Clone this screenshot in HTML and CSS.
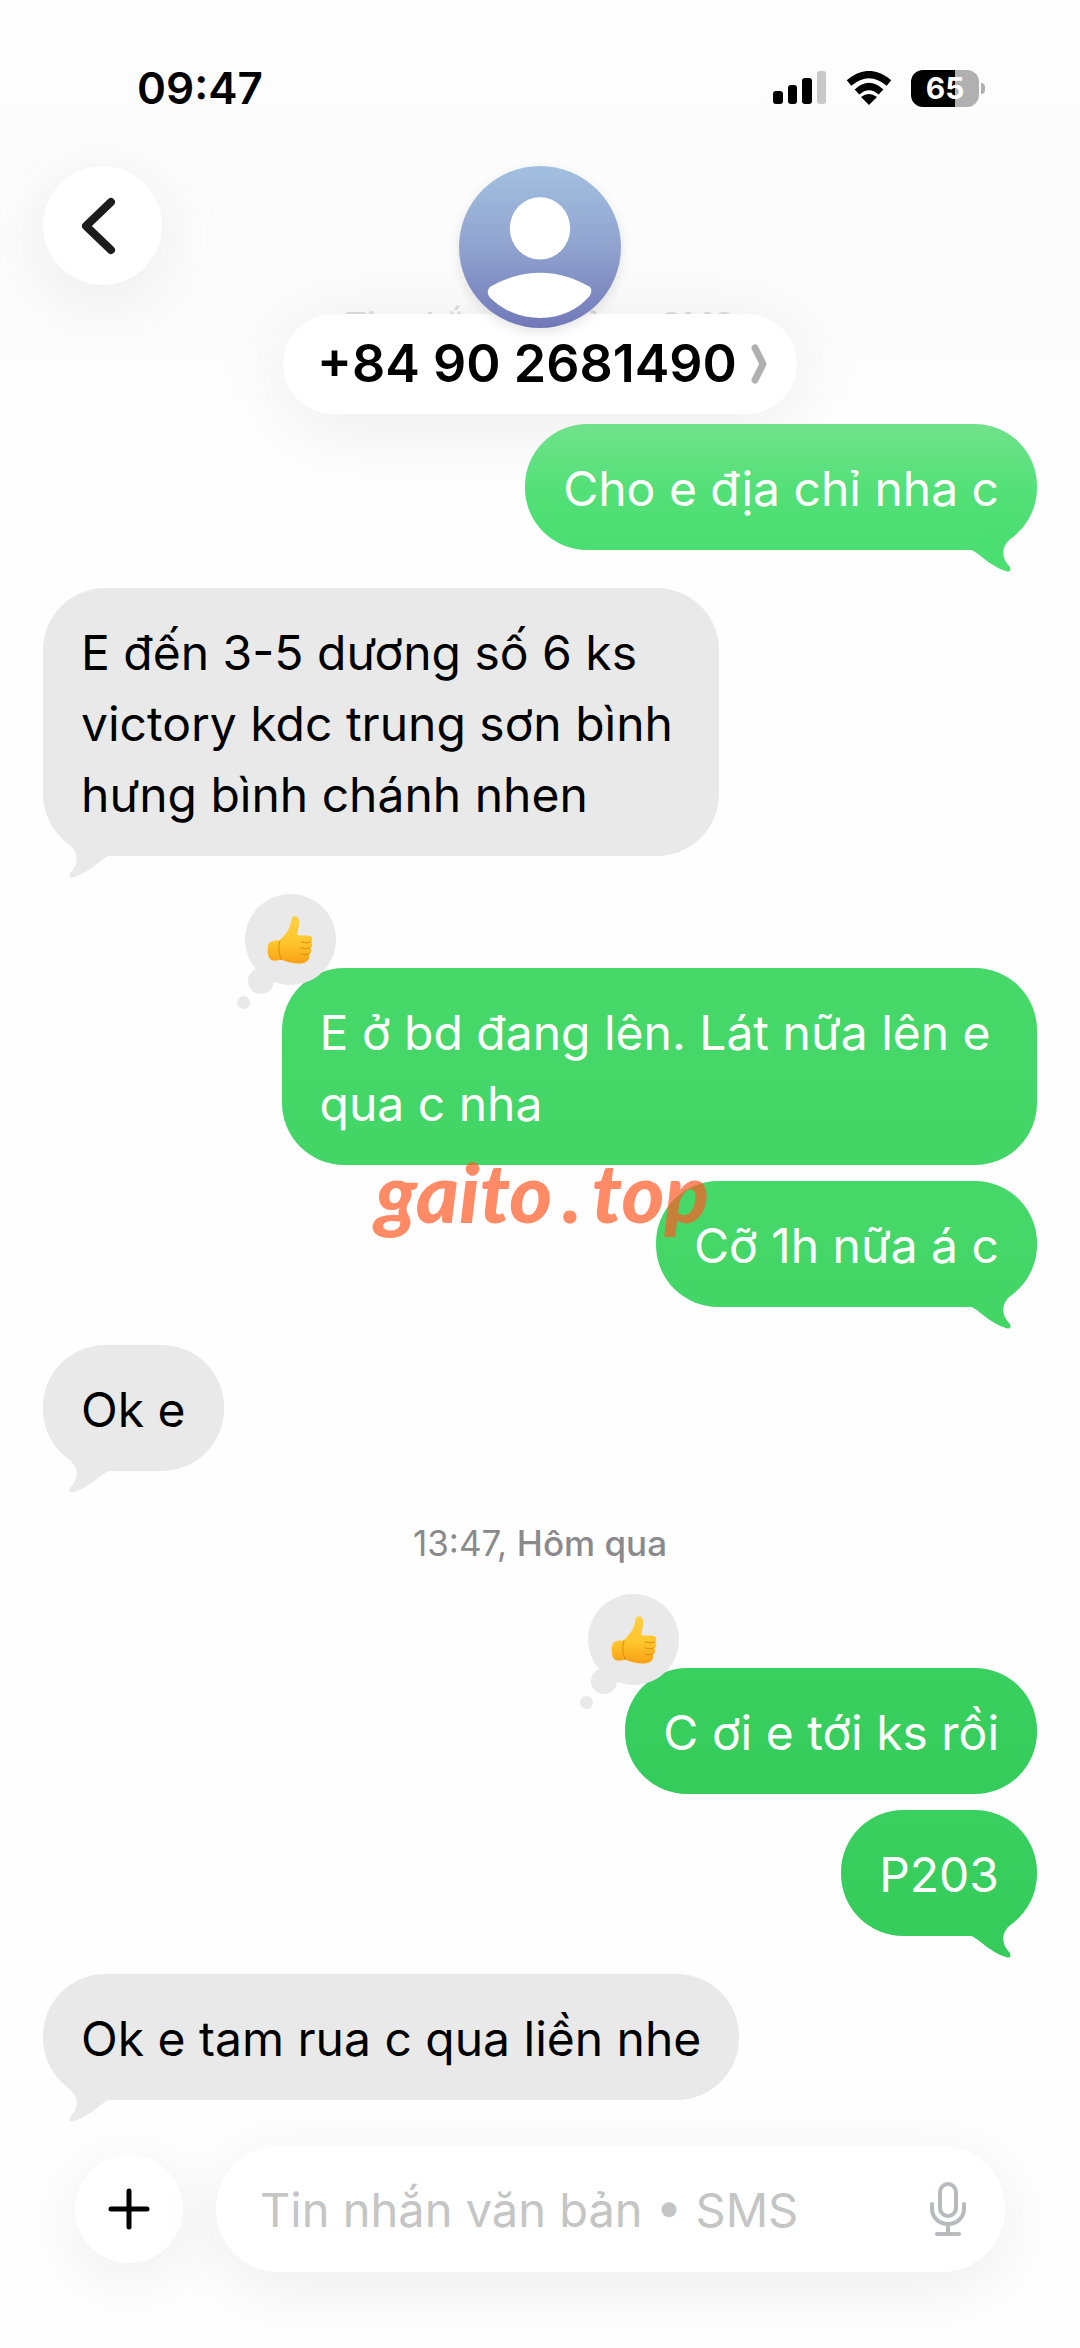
FILE: index.html
```html
<!DOCTYPE html>
<html lang="vi">
<head>
<meta charset="utf-8">
<meta name="viewport" content="width=device-width, initial-scale=1">
<title>+84 90 2681490</title>
<link rel="stylesheet" href="styles.css">
</head>
<body>
<svg class="defs" width="0" height="0" aria-hidden="true">
  <defs>
    <symbol id="tail" viewBox="0 0 66 50">
      <path d="M0 18V26C6 27 18 42 35 47Q41 49 39 43C33 37 31 30 33 24C35 18 41 13 46 8L20 5Z"/>
    </symbol>
    <linearGradient id="thumb-fill" x1="0" y1="0" x2="0" y2="1">
      <stop offset="0" stop-color="#ffcf45"/>
      <stop offset=".55" stop-color="#ffc62c"/>
      <stop offset="1" stop-color="#f7a014"/>
    </linearGradient>
    <symbol id="thumb" viewBox="0 0 46 50">
      <path fill="url(#thumb-fill)" d="M25 3C27 0 31 1 32 5C33 10 31 15 30 20C34 21 39 20 43 21C46 22 46 26 44 27C46 29 46 32 43 33C45 35 45 38 42 39C43 42 42 45 39 47C33 50 22 48 15 45C11 45 6 47 3 44C0 40 0 32 2 28C5 25 10 26 13 25C17 21 22 15 23 11C24 8 24 5 25 3Z"/>
      <path fill="none" stroke="#e08a12" stroke-width="1" stroke-linecap="round" d="M34 27Q39 29 44 27M34 33Q39 35 43 33M34 39Q38 41 42 39M13 26Q10 34 14 44"/>
    </symbol>
  </defs>
</svg>

<header class="header">
  <div class="status">
    <time class="clock">09:47</time>
    <div class="indicators">
      <svg width="54" height="34" viewBox="0 0 54 34" role="img" aria-label="Sóng">
        <rect x="0" y="20" width="10" height="13" rx="3"/>
        <rect x="15" y="14" width="9" height="19" rx="3"/>
        <rect x="29" y="7" width="10" height="26" rx="3"/>
        <rect x="44" y="0" width="9" height="33" rx="3" fill="#c8c8c8"/>
      </svg>
      <svg width="46" height="34" viewBox="0 0 46 34" role="img" aria-label="Wi-Fi">
        <g fill="none" stroke="#000" stroke-width="7">
          <path d="M3 12Q23 -5 43 12"/>
          <path d="M11 21Q23 10 35 21"/>
        </g>
        <path d="M23 34L15 26Q23 20 31 26Z"/>
      </svg>
      <div class="battery"><span class="battery-level">65</span></div>
    </div>
  </div>

  <nav class="nav">
    <button class="back" aria-label="Quay lại">
      <svg width="36" height="58" viewBox="0 0 36 58"><path d="M31 5L6 29L31 53" fill="none" stroke="#1c1c1c" stroke-width="8" stroke-linecap="round" stroke-linejoin="round"/></svg>
    </button>
    <div class="contact">
      <p class="service">Tin nhắn văn bản • SMS</p>
      <svg class="avatar" width="162" height="162" viewBox="0 0 161 161" aria-hidden="true">
        <defs>
          <linearGradient id="avatar-fill" x1="0" y1="0" x2="0" y2="1">
            <stop offset="0" stop-color="#a3c0e0"/>
            <stop offset=".5" stop-color="#90a3cf"/>
            <stop offset="1" stop-color="#7178b8"/>
          </linearGradient>
        </defs>
        <circle cx="80.5" cy="80.5" r="80.5" fill="url(#avatar-fill)"/>
        <ellipse cx="80.5" cy="62" rx="30" ry="31" fill="#fff"/>
        <path d="M31 120C45 112 62 106 81 106C99 106 116 112 130 120Q133 124 130 129C118 143 101 151 81 151C60 151 43 143 31 131Q26 125 31 120Z" fill="#fff"/>
      </svg>
      <button class="contact-name">+84 90 2681490
        <svg width="16" height="40" viewBox="0 0 16 40" aria-hidden="true"><path d="M4 4L12 20L4 36" fill="none" stroke="#b0b0b0" stroke-width="7" stroke-linecap="round" stroke-linejoin="round"/></svg>
      </button>
    </div>
  </nav>
</header>

<main class="thread">
  <section class="group sent">
    <p class="bubble faded">Cho e địa chỉ nha c<svg class="tail"><use href="#tail"/></svg></p>
  </section>
  <section class="group received">
    <p class="bubble long">E đến 3-5 dương số 6 ks victory kdc trung sơn bình hưng bình chánh nhen<svg class="tail"><use href="#tail"/></svg></p>
  </section>
  <section class="group sent reacted tone-mid">
    <div class="bubble long">E ở bd đang lên. Lát nữa lên e qua c nha
      <span class="reaction"><svg width="46" height="50" role="img" aria-label="Thích"><use href="#thumb"/></svg></span>
    </div>
    <p class="bubble">Cỡ 1h nữa á c<svg class="tail"><use href="#tail"/></svg><span class="watermark">gaito<span class="dot">.</span>top</span></p>
  </section>
  <section class="group received">
    <p class="bubble">Ok e<svg class="tail"><use href="#tail"/></svg></p>
  </section>
  <p class="stamp">13:47, <strong>Hôm qua</strong></p>
  <section class="group sent reacted tone-deep">
    <div class="bubble">C ơi e tới ks rồi
      <span class="reaction"><svg width="46" height="50" role="img" aria-label="Thích"><use href="#thumb"/></svg></span>
    </div>
    <p class="bubble">P203<svg class="tail"><use href="#tail"/></svg></p>
  </section>
  <section class="group received">
    <p class="bubble">Ok e tam rua c qua liền nhe<svg class="tail"><use href="#tail"/></svg></p>
  </section>
</main>

<form class="composer">
  <button class="add" type="button" aria-label="Thêm">
    <svg width="42" height="42" viewBox="0 0 42 42"><path d="M21 3V39M3 21H39" stroke="#000" stroke-width="5" stroke-linecap="round"/></svg>
  </button>
  <div class="field">
    <input class="field-input" type="text" aria-label="Tin nhắn" placeholder="Tin nhắn văn bản • SMS">
    <button class="mic" type="button" aria-label="Đọc chính tả">
      <svg width="36" height="54" viewBox="0 0 36 54" fill="none" stroke="#b8babd" stroke-width="4" stroke-linecap="round">
        <rect x="10" y="2" width="16" height="32" rx="8"/>
        <path d="M2 22V26C2 36 9 42 18 42C27 42 34 36 34 26V22M18 42V51M7 52H29"/>
      </svg>
    </button>
  </div>
</form>
</body>
</html>
```
FILE: styles.css
```css
* {
  box-sizing: border-box;
}

body {
  margin: 0;
  background: #fefefe;
  color: #000;
  font-family: Inter, "Noto Sans", sans-serif;
  overflow-x: hidden;
}

p {
  margin: 0;
}

button {
  border: 0;
  padding: 0;
  background: #fff;
  color: inherit;
  font: inherit;
}

svg {
  display: block;
}

.defs {
  position: absolute;
}

/* Header */

.header {
  padding-top: 62px;
  background: linear-gradient(#fdfdfd, #fcfcfc 80%, #fefefe);
}

.status {
  display: flex;
  justify-content: space-between;
  align-items: center;
  padding: 0 95px 0 137px;
}

.clock {
  font-size: 44px;
  line-height: 52px;
  font-weight: 600;
}

.indicators {
  display: flex;
  align-items: center;
  gap: 19px;
}

.battery {
  position: relative;
  width: 68px;
  height: 37px;
  margin-right: 6px;
  border-radius: 12px;
  background: linear-gradient(90deg, #000 65%, #b0b0b0 65%);
  color: #fff;
  text-align: center;
}

.battery::after {
  content: "";
  position: absolute;
  left: 70px;
  top: 13px;
  width: 4px;
  height: 11px;
  border-radius: 0 4px 4px 0;
  background: #b0b0b0;
}

.battery-level {
  font-size: 30px;
  line-height: 37px;
  font-weight: 700;
}

.nav {
  display: grid;
  grid-template-columns: 1fr auto 1fr;
  align-items: start;
  margin-top: 52px;
  padding: 0 43px;
}

.back {
  display: grid;
  place-items: center;
  width: 119px;
  height: 119px;
  padding-right: 10px;
  border-radius: 50%;
  box-shadow: 0 12px 80px rgba(0, 0, 0, 0.08);
}

.contact {
  position: relative;
  display: flex;
  flex-direction: column;
  align-items: center;
}

.avatar {
  position: relative;
  z-index: 1;
  filter: drop-shadow(0 4px 6px rgba(0, 0, 0, 0.1));
}

.contact-name {
  position: relative;
  display: flex;
  align-items: center;
  gap: 14px;
  height: 100px;
  margin-top: -14px;
  padding: 0 30px 0 34px;
  border-radius: 50px;
  box-shadow: 0 12px 80px rgba(0, 0, 0, 0.08);
  font-size: 52px;
  font-weight: 600;
  line-height: 98px;
  white-space: nowrap;
}

/* Service label that has scrolled beneath the contact pill */
.service {
  position: absolute;
  top: 141px;
  color: #dedede;
  font-size: 34px;
  line-height: 36px;
  font-weight: 500;
  white-space: nowrap;
}

/* Conversation */

.thread {
  display: flex;
  flex-direction: column;
  padding: 10px 43px 0;
}

.group {
  display: flex;
  flex-direction: column;
  gap: 16px;
  align-items: flex-start;
}

.group + .group {
  margin-top: 38px;
}

.group + .reacted {
  margin-top: 112px;
}

.sent {
  align-items: flex-end;
}

.bubble {
  position: relative;
  padding: 29px 38px 26px;
  border-radius: 62px;
  background: #e9e9e9;
  fill: #e9e9e9;
  font-size: 48px;
  line-height: 71px;
}

.received .long {
  max-width: 68%;
}

.sent .long {
  max-width: 76%;
}

.sent .bubble {
  color: #fff;
}

.sent .faded {
  background: linear-gradient(#70e28b, #52e077 55%, #4bde71);
  fill: #4bde71;
}

.tone-mid .bubble {
  background: linear-gradient(#46d969, #43d667);
  fill: #43d667;
}

.tone-deep .bubble {
  background: linear-gradient(#39d060, #35cc5c);
  fill: #35cc5c;
}

.tail {
  position: absolute;
  right: 0;
  bottom: -24px;
  width: 66px;
  height: 50px;
}

.received .tail {
  right: auto;
  left: 0;
  transform: scaleX(-1);
}

.reaction {
  position: absolute;
  left: -37px;
  top: -74px;
  display: grid;
  place-items: center;
  width: 91px;
  height: 91px;
  border-radius: 50%;
  background: #e9e9e9;
}

.reaction::before,
.reaction::after {
  content: "";
  position: absolute;
  border-radius: 50%;
  background: #e9e9e9;
}

.reaction::before {
  left: 3px;
  top: 74px;
  width: 26px;
  height: 26px;
}

.reaction::after {
  left: -8px;
  top: 102px;
  width: 13px;
  height: 13px;
}

.watermark {
  position: absolute;
  right: 328px;
  top: -32px;
  color: #ff5a26;
  opacity: 0.7;
  font-family: Lato, sans-serif;
  font-size: 82px;
  font-style: italic;
  font-weight: 900;
  line-height: 84px;
  white-space: nowrap;
}

.dot {
  padding: 0 10px;
}

.stamp {
  margin: 54px 0 107px;
  color: #8a8a8d;
  font-size: 35px;
  line-height: 36px;
  text-align: center;
}

.stamp strong {
  font-weight: 500;
}

/* Composer */

.composer {
  display: flex;
  align-items: center;
  gap: 33px;
  padding: 46px 75px 74px;
}

.add {
  display: grid;
  flex: none;
  place-items: center;
  width: 108px;
  height: 108px;
  border-radius: 50%;
  box-shadow: 0 14px 70px rgba(0, 0, 0, 0.07);
}

.field {
  display: flex;
  flex: 1;
  align-items: center;
  min-width: 0;
  height: 126px;
  padding: 0 39px 0 44px;
  border-radius: 63px;
  background: #fff;
  box-shadow: 0 14px 70px rgba(0, 0, 0, 0.07);
}

.field-input {
  flex: 1;
  min-width: 0;
  border: 0;
  padding: 0;
  background: none;
  font: inherit;
  font-size: 47px;
  line-height: 71px;
}

.field-input::placeholder {
  color: #c5c5c5;
  opacity: 1;
}
```
